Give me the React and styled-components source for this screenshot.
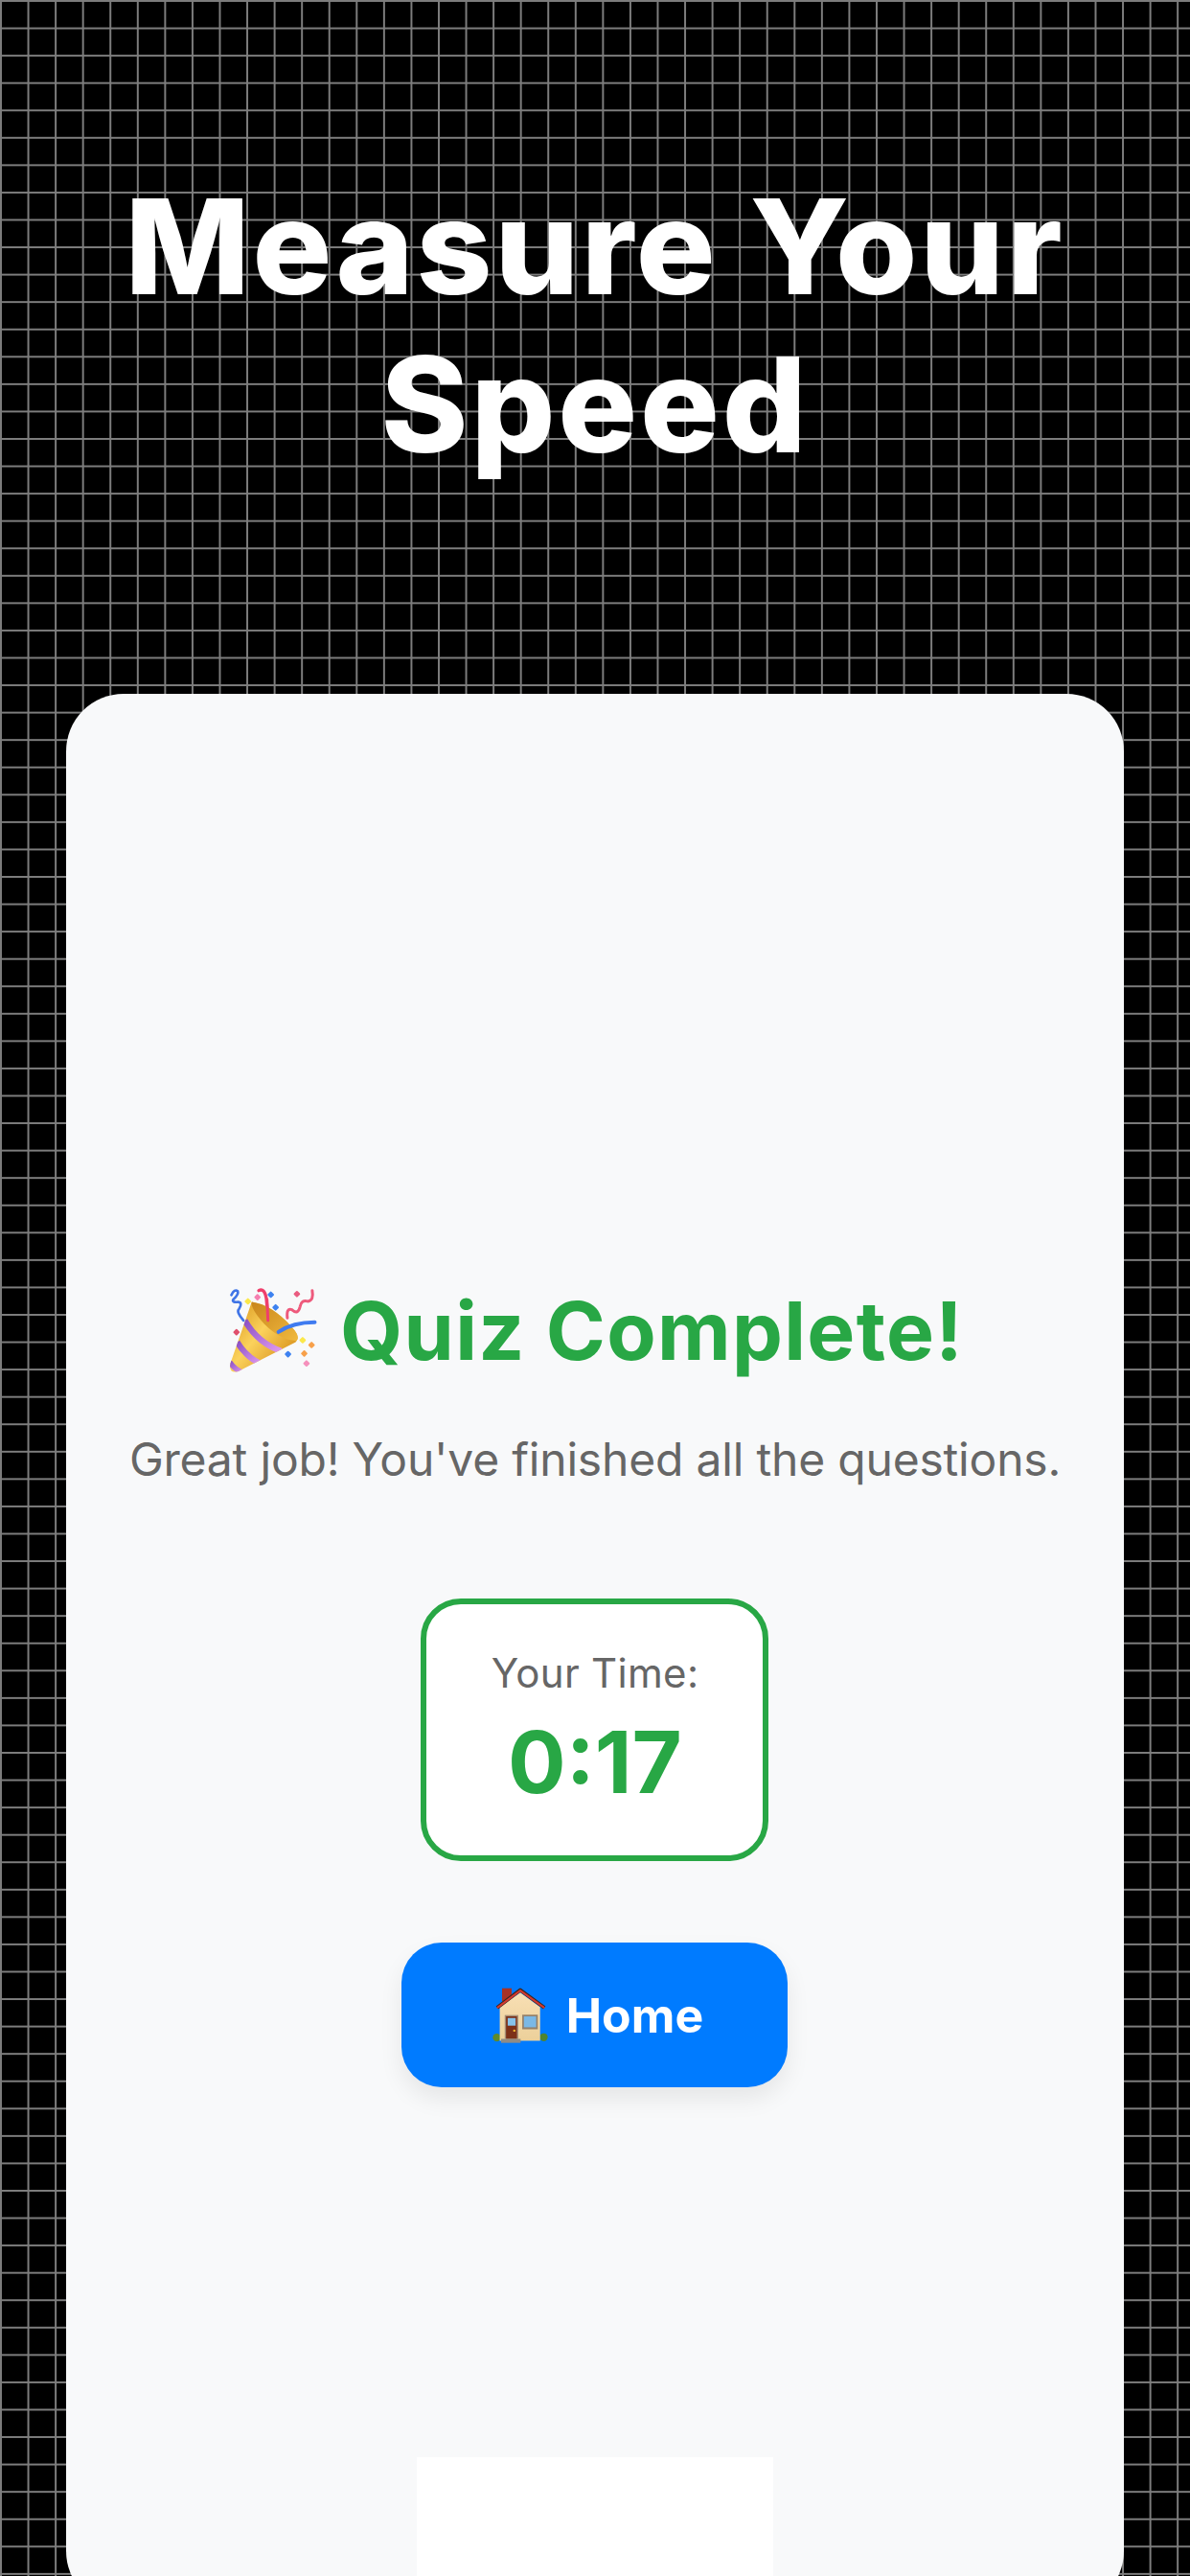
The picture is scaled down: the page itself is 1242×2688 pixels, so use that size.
import React from 'react';
import styled, { createGlobalStyle } from 'styled-components';

const GlobalStyle = createGlobalStyle`
    html, body {
        margin: 0;
        padding: 0;
        background: #000;
    }
    * {
        box-sizing: border-box;
    }
`;

const Page = styled.div`
    display: flex;
    flex-direction: column;
    align-items: center;
    width: 1242px;
    height: 2688px;
    overflow: hidden;
    background-color: #000;
    background-image:
        linear-gradient(to right, #7d7d7d 1.5px, transparent 1.5px),
        linear-gradient(to bottom, #7d7d7d 1.5px, transparent 1.5px);
    background-size: 28.57px 28.57px;
`;

const Title = styled.h1`
    flex-shrink: 0;
    width: 1100px;
    height: 724px;
    margin: 0;
    padding-top: 174px;
    font-family: "Inter", "Liberation Sans", sans-serif;
    font-size: 138px;
    font-weight: 800;
    line-height: 165px;
    letter-spacing: 2.8px;
    text-align: center;
    color: #fff;
`;

const Card = styled.main`
    display: flex;
    flex-direction: column;
    align-items: center;
    flex-shrink: 0;
    width: 1104px;
    height: 1998px;
    border-radius: 60px;
    overflow: hidden;
    background: #f8f9fa;
`;

const Result = styled.section`
    display: flex;
    flex-direction: column;
    align-items: center;
    flex: 1;
    padding-top: 616px;
`;

const Heading = styled.h2`
    display: flex;
    align-items: center;
    gap: 24px;
    height: 96px;
    margin: 0;
    font-family: "Inter", "Liberation Sans", sans-serif;
    font-size: 84px;
    font-weight: 700;
    letter-spacing: 1.3px;
    color: #28a745;
`;

const Message = styled.p`
    margin: 58px 0 0;
    font-family: "Inter", "Liberation Sans", sans-serif;
    font-size: 48px;
    line-height: 58px;
    letter-spacing: -0.19px;
    color: #666;
`;

const TimeBox = styled.div`
    display: flex;
    flex-direction: column;
    align-items: center;
    width: 363px;
    height: 274px;
    margin-top: 116px;
    padding-top: 47px;
    border: 6px solid #28a745;
    border-radius: 42px;
    background: #fff;
`;

const TimeLabel = styled.span`
    font-family: "Inter", "Liberation Sans", sans-serif;
    font-size: 42px;
    line-height: 50px;
    letter-spacing: 0.3px;
    color: #666;
`;

const TimeValue = styled.span`
    margin-top: 18px;
    font-family: "Inter", "Liberation Sans", sans-serif;
    font-size: 90px;
    font-weight: 700;
    line-height: 100px;
    color: #28a745;
`;

const HomeButton = styled.button`
    display: flex;
    align-items: center;
    justify-content: center;
    gap: 19px;
    width: 403px;
    height: 151px;
    margin-top: 85px;
    padding: 0 0 0 6px;
    border: none;
    border-radius: 42px;
    background: #007bff;
    box-shadow: 0 12px 24px rgba(0, 0, 0, 0.08);
    font-family: "Inter", "Liberation Sans", sans-serif;
    font-size: 50px;
    font-weight: 700;
    color: #fff;
`;

const AdSlot = styled.div`
    flex-shrink: 0;
    width: 372px;
    height: 158px;
    background: #fff;
`;

const PartyPopper = () => (
    <svg width="95" height="93" viewBox="20 20 285 280" aria-hidden="true">
        <defs>
            <linearGradient id="coneGold" x1="0.1" y1="0.2" x2="0.8" y2="0.8">
                <stop offset="0" stopColor="#e2a52c" />
                <stop offset="0.45" stopColor="#fbd25c" />
                <stop offset="1" stopColor="#dd9a24" />
            </linearGradient>
            <linearGradient id="coneInner" x1="0" y1="0" x2="1" y2="1">
                <stop offset="0" stopColor="#c9861c" />
                <stop offset="1" stopColor="#f0b93e" />
            </linearGradient>
            <linearGradient id="coneStripe" x1="0" y1="0" x2="1" y2="1">
                <stop offset="0" stopColor="#8a4fc4" />
                <stop offset="1" stopColor="#e09af0" />
            </linearGradient>
            <clipPath id="coneClip">
                <path d="M100 70 L33 262 Q26 296 58 288 L238 196 Q255 180 225 148 Q165 80 100 70 Z" />
            </clipPath>
        </defs>
        <path d="M36 48 Q46 28 56 36 Q60 46 42 62 Q36 72 58 70 Q72 72 60 92 Q50 100 74 128" fill="none" stroke="#3f74e6" strokeWidth="8" strokeLinecap="round" />
        <path d="M122 34 Q140 24 146 60 L152 128" fill="none" stroke="#ef3f6c" strokeWidth="10" strokeLinecap="round" />
        <path d="M212 120 Q208 88 226 94 Q246 112 252 84 Q256 62 276 68 Q296 66 290 34" fill="none" stroke="#ee5a7c" strokeWidth="9" strokeLinecap="round" />
        <path d="M100 70 L33 262 Q26 296 58 288 L238 196 Q255 180 225 148 Q165 80 100 70 Z" fill="url(#coneGold)" />
        <g clipPath="url(#coneClip)">
            <path d="M78 128 Q120 200 192 224" fill="none" stroke="url(#coneStripe)" strokeWidth="19" />
            <path d="M54 196 Q82 242 128 264" fill="none" stroke="url(#coneStripe)" strokeWidth="19" />
            <path d="M30 258 Q46 282 72 292" fill="none" stroke="url(#coneStripe)" strokeWidth="17" />
        </g>
        <path d="M100 70 Q165 80 225 148 Q255 180 240 192 Q190 190 140 140 Q96 92 100 70 Z" fill="url(#coneInner)" />
        <path d="M184 164 Q230 134 298 134" fill="none" stroke="#3f7bf0" strokeWidth="12" strokeLinecap="round" />
        <path d="M148 62 L151 128" fill="none" stroke="#ef3f6c" strokeWidth="9" strokeLinecap="round" />
        <rect x="80" y="60" width="16" height="16" rx="3" fill="#fbe84a" transform="rotate(45 88 68)" />
        <rect x="110" y="47" width="16" height="16" rx="3" fill="#f57fb0" transform="rotate(45 118 55)" />
        <rect x="152" y="39" width="16" height="16" rx="3" fill="#3d82f0" transform="rotate(45 160 47)" />
        <rect x="167" y="79" width="16" height="16" rx="3" fill="#3d82f0" transform="rotate(45 175 87)" />
        <rect x="234" y="37" width="16" height="16" rx="3" fill="#ea5c80" transform="rotate(45 242 45)" />
        <rect x="44" y="157" width="16" height="16" rx="3" fill="#e0506c" transform="rotate(45 52 165)" />
        <rect x="252" y="182" width="16" height="16" rx="3" fill="#fbe84a" transform="rotate(45 260 190)" />
        <rect x="280" y="197" width="16" height="16" rx="3" fill="#f7a04a" transform="rotate(45 288 205)" />
        <rect x="257" y="224" width="16" height="16" rx="3" fill="#f7a04a" transform="rotate(45 265 232)" />
        <rect x="206" y="226" width="16" height="16" rx="3" fill="#3d82f0" transform="rotate(45 214 234)" />
        <rect x="264" y="255" width="16" height="16" rx="3" fill="#f590bc" transform="rotate(45 272 263)" />
    </svg>
);

const HouseIcon = () => (
    <svg width="58" height="58" viewBox="46 45 168 168" aria-hidden="true">
        <defs>
            <linearGradient id="wallTone" x1="0" y1="0" x2="0" y2="1">
                <stop offset="0" stopColor="#f8dfb4" />
                <stop offset="1" stopColor="#ecd09a" />
            </linearGradient>
        </defs>
        <circle cx="59" cy="196" r="12" fill="#5d8a2c" />
        <circle cx="201" cy="195" r="12" fill="#4f8430" />
        <rect x="75" y="47" width="29" height="40" fill="#a93226" />
        <path d="M68 104 L130 60 L190 104 V206 H68 Z" fill="url(#wallTone)" />
        <path d="M60 106 L130 52 L203 106" fill="none" stroke="#3a2620" strokeWidth="11" strokeLinejoin="round" />
        <path d="M60 106 L130 54 L203 106" fill="none" stroke="#d43a30" strokeWidth="6" strokeLinejoin="round" />
        <rect x="83" y="128" width="41" height="72" fill="#a69078" />
        <rect x="87" y="132" width="33" height="68" fill="#7c3018" />
        <rect x="92" y="137" width="24" height="23" fill="#86c2ea" />
        <circle cx="112" cy="175" r="3.5" fill="#f2b632" />
        <rect x="136" y="127" width="47" height="44" fill="#94806a" />
        <rect x="141" y="132" width="37" height="33" fill="#7ab8e6" />
        <rect x="72" y="200" width="59" height="12" fill="#8f8b84" />
    </svg>
);

const App = () => {
    return (
        <>
            <GlobalStyle />
            <Page>
                <Title>Measure Your Speed</Title>
                <Card>
                    <Result>
                        <Heading>
                            <PartyPopper />
                            Quiz Complete!
                        </Heading>
                        <Message>Great job! You've finished all the questions.</Message>
                        <TimeBox>
                            <TimeLabel>Your Time:</TimeLabel>
                            <TimeValue>0:17</TimeValue>
                        </TimeBox>
                        <HomeButton>
                            <HouseIcon />
                            Home
                        </HomeButton>
                    </Result>
                    <AdSlot />
                </Card>
            </Page>
        </>
    );
};

export default App;
